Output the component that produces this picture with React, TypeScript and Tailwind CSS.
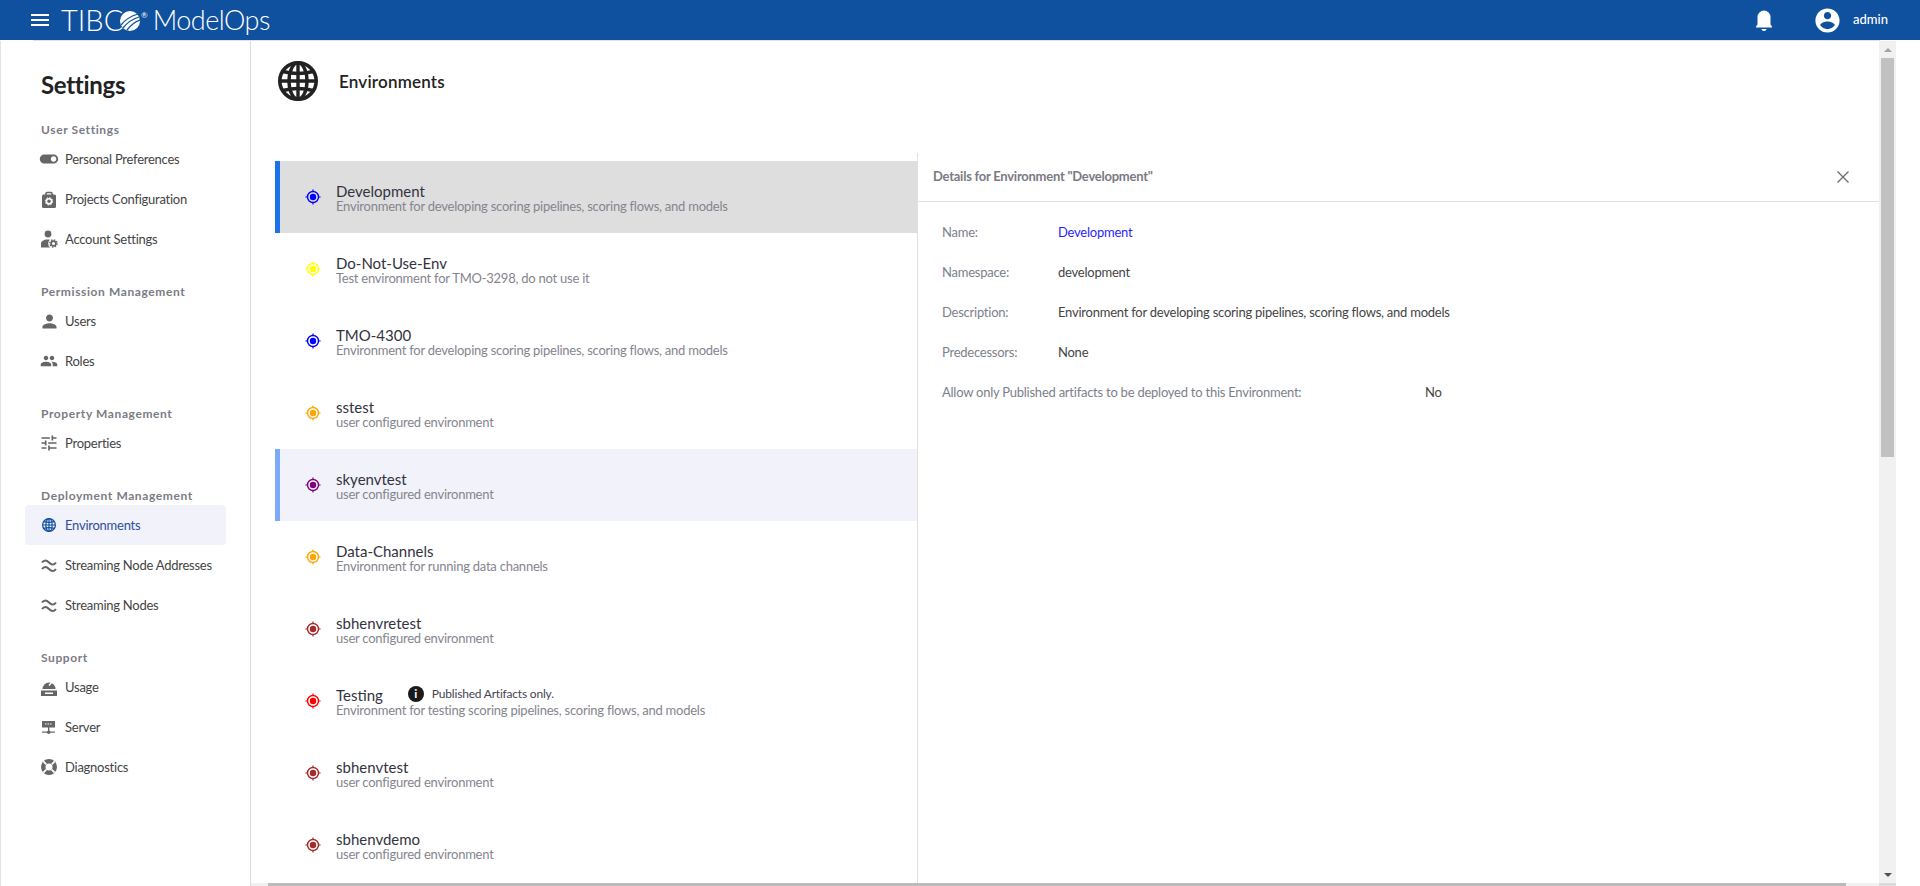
import React from "react";

const FONT = "font-['Lato','Noto_Sans',sans-serif]";

function Mui({ d, size, cls }: { d: string; size: number; cls?: string }) {
  return (
    <svg viewBox="0 0 24 24" width={size} height={size} className={cls} fill="currentColor">
      <path d={d} />
    </svg>
  );
}

function Globe({ size, cls }: { size: number; cls?: string }) {
  return (
    <svg viewBox="0 0 40 40" width={size} height={size} className={cls} fill="none" stroke="currentColor">
      <circle cx="20" cy="20" r="18.2" strokeWidth="3.6" />
      <ellipse cx="20" cy="20" rx="9" ry="18.2" strokeWidth="3.4" />
      <path d="M20 2v36M2 20h36" strokeWidth="3.4" />
      <path d="M5 10.5Q20 14.5 35 10.5M5 29.5Q20 25.5 35 29.5" strokeWidth="3.4" />
    </svg>
  );
}

function Box({ children }: { children: React.ReactNode }) {
  return <svg viewBox="0 0 20 20" width={20} height={20} fill="#666666">{children}</svg>;
}

const icons: Record<string, React.ReactNode> = {
  toggle: <Mui size={22} cls="shrink-0 text-[#666666]" d="M17 7H7c-2.76 0-5 2.24-5 5s2.24 5 5 5h10c2.76 0 5-2.24 5-5s-2.24-5-5-5zm0 8c-1.66 0-3-1.34-3-3s1.34-3 3-3 3 1.34 3 3-1.34 3-3 3z" />,
  case: (
    <Box>
      <path d="M7 6V4.5a1 1 0 0 1 1-1h4a1 1 0 0 1 1 1V6" fill="none" stroke="#666666" strokeWidth="1.6" />
      <rect x="3" y="5.500" width="14" height="13.500" rx="1.5" />
      <circle cx="10" cy="12.3" r="2.6" fill="none" stroke="#ffffff" strokeWidth="1.6" />
      <circle cx="10" cy="12.3" r="3.7" fill="none" stroke="#ffffff" strokeWidth="1" strokeDasharray="1.4 1.5" />
    </Box>
  ),
  account: (
    <Box>
      <circle cx="9" cy="5" r="3.4" />
      <path d="M2 18.500v-4C2 12.500 5 10.500 8.500 10.500c1.500 0 3 .3 4 .8V18.500z" />
      <circle cx="14.500" cy="14.500" r="5.300" fill="#ffffff" />
      <circle cx="14.500" cy="14.500" r="2.400" fill="none" stroke="#666666" strokeWidth="1.600" />
      <circle cx="14.500" cy="14.500" r="3.600" fill="none" stroke="#666666" strokeWidth="1.400" strokeDasharray="1.500 1.300" />
    </Box>
  ),
  users: <Mui size={21} cls="shrink-0 text-[#666666]" d="M12 12c2.21 0 4-1.790 4-4s-1.790-4-4-4-4 1.790-4 4 1.790 4 4 4zm0 2c-2.670 0-8 1.340-8 4v2h16v-2c0-2.660-5.330-4-8-4z" />,
  roles: <Mui size={18} cls="shrink-0 text-[#666666]" d="M16 11c1.660 0 2.990-1.340 2.990-3S17.660 5 16 5c-1.660 0-3 1.340-3 3s1.340 3 3 3zm-8 0c1.660 0 2.990-1.340 2.990-3S9.660 5 8 5C6.340 5 5 6.340 5 8s1.340 3 3 3zm0 2c-2.330 0-7 1.170-7 3.500V19h14v-2.500c0-2.330-4.670-3.500-7-3.500zm8 0c-.29 0-.62.02-.97.05 1.160.84 1.970 1.970 1.970 3.450V19h6v-2.500c0-2.330-4.670-3.500-7-3.500z" />,
  tune: <Mui size={20} cls="shrink-0 text-[#666666]" d="M3 17v2h6v-2H3zM3 5v2h10V5H3zm10 16v-2h8v-2h-8v-2h-2v6h2zM7 9v2H3v2h4v2h2V9H7zm14 4v-2H11v2h10zm-6-4h2V7h4V5h-4V3h-2v6z" />,
  globe: <Globe size={14} cls="text-[#0f519f]" />,
  waves: (
    <Box>
      <path d="M3 7.500c2-2.800 4.500-2.800 7 0s5 2.800 7 0M3 14c2-2.800 4.500-2.800 7 0s5 2.800 7 0" fill="none" stroke="#666666" strokeWidth="2" />
    </Box>
  ),
  usage: (
    <Box>
      <path d="M3.500 12a6.500 6.500 0 1 1 13 0z" />
      <path d="M10 8.500l3-3.500" stroke="#ffffff" strokeWidth="1.500" />
      <rect x="2" y="13.500" width="16" height="5.500" />
      <rect x="6" y="15.500" width="8" height="1.500" fill="#ffffff" />
    </Box>
  ),
  server: (
    <Box>
      <rect x="3" y="4" width="13" height="6.500" />
      <path d="M6 7h1.500M8.500 7h1.500M11 7h1.500" stroke="#ffffff" strokeWidth="1.200" />
      <rect x="9" y="10" width="1.400" height="6" />
      <rect x="3" y="14.500" width="13" height="1.200" />
      <circle cx="9.700" cy="15.200" r="1.800" />
    </Box>
  ),
  diag: (
    <Box>
      <circle cx="10" cy="10" r="8" />
      <path d="M4.300 4.300l3 3M15.700 4.300l-3 3M4.300 15.700l3-3M15.700 15.700l-3-3" stroke="#ffffff" strokeWidth="1.800" />
      <circle cx="10" cy="10" r="3.500" fill="#ffffff" />
    </Box>
  ),
};

const sections = [
  { title: "User Settings", items: [["toggle", "Personal Preferences"], ["case", "Projects Configuration"], ["account", "Account Settings"]] },
  { title: "Permission Management", items: [["users", "Users"], ["roles", "Roles"]] },
  { title: "Property Management", items: [["tune", "Properties"]] },
  { title: "Deployment Management", items: [["globe", "Environments"], ["waves", "Streaming Node Addresses"], ["waves", "Streaming Nodes"]] },
  { title: "Support", items: [["usage", "Usage"], ["server", "Server"], ["diag", "Diagnostics"]] },
];

const ENV = "Environment for developing scoring pipelines, scoring flows, and models";
const CONF = "user configured environment";
const envs = [
  { name: "Development", desc: ENV, color: "#0000ff", state: "selected" },
  { name: "Do-Not-Use-Env", desc: "Test environment for TMO-3298, do not use it", color: "#ffff00" },
  { name: "TMO-4300", desc: ENV, color: "#0000ff" },
  { name: "sstest", desc: CONF, color: "#ffa500" },
  { name: "skyenvtest", desc: CONF, color: "#800080", state: "hover" },
  { name: "Data-Channels", desc: "Environment for running data channels", color: "#ffa500" },
  { name: "sbhenvretest", desc: CONF, color: "#a52a2a" },
  { name: "Testing", desc: "Environment for testing scoring pipelines, scoring flows, and models", color: "#ff0000", info: true },
  { name: "sbhenvtest", desc: CONF, color: "#a52a2a" },
  { name: "sbhenvdemo", desc: CONF, color: "#a52a2a" },
];

function Target({ color }: { color: string }) {
  return (
    <svg viewBox="0 0 16 16" width={16} height={16} fill={color}>
      <circle cx="8" cy="8" r="5.500" fill="none" stroke={color} strokeWidth="1.400" />
      <circle cx="8" cy="8" r="3.200" />
      <path d="M8 .4v2.200M8 13.400v2.200M.4 8h2.200M13.400 8h2.200" stroke={color} strokeWidth="1.200" />
    </svg>
  );
}

function Sidebar() {
  return (
    <aside className="w-[251px] shrink-0 border-l border-r border-l-[#e4e4e4] border-r-[#dcdcdc] pt-[28px]">
      <h1 className="ml-[40px] h-[32px] text-[24px] leading-[32px] font-bold tracking-[-0.3px] text-[#222222]">Settings</h1>
      <div className="mt-[18px] flex flex-col gap-[22px]">
        {sections.map((s) => (
          <section key={s.title}>
            <h2 className="ml-[40px] h-[20px] text-[12px] leading-[22px] font-bold tracking-[0.6px] text-[#7b7b85]">{s.title}</h2>
            {s.items.map(([icon, label]) => {
              const active = label === "Environments";
              return (
                <div
                  key={label}
                  className={`ml-[24px] flex h-[40px] w-[201px] items-center gap-[6px] rounded-[4px] pl-[14px] text-[13px] tracking-[-0.25px] whitespace-nowrap ${active ? "bg-[#f1f2fa] text-[#2f4f9f]" : "text-[#444444]"}`}
                >
                  <span className="flex h-[20px] w-[20px] items-center justify-center">{icons[icon]}</span>
                  <span className="mt-[2px]">{label}</span>
                </div>
              );
            })}
          </section>
        ))}
      </div>
    </aside>
  );
}

function EnvRow({ e }: { e: (typeof envs)[number] }) {
  const bg = e.state === "selected" ? "bg-[#dedede] border-l-[#1a73e8]" : e.state === "hover" ? "bg-[#f1f2fa] border-l-[#7baaf7]" : "bg-white border-l-white";
  return (
    <div className={`flex h-[72px] items-start border-l-[5px] pl-[25px] ${bg}`}>
      <span className="mt-[28px] flex h-[16px] w-[16px] shrink-0">
        <Target color={e.color} />
      </span>
      <div className="ml-[15px] pt-[21px]">
        <div className="flex h-[16px] items-center">
          <span className="mt-[1px] text-[15px] leading-[16px] text-[#333340]">{e.name}</span>
          {e.info && (
            <>
              <span className="ml-[25px] flex h-[16px] w-[16px] items-center justify-center rounded-full bg-[#1a1a1a] text-[12px] leading-none font-bold text-white">i</span>
              <span className="ml-[8px] text-[12px] leading-[16px] tracking-[-0.2px] text-[#444450]">Published Artifacts only.</span>
            </>
          )}
        </div>
        <div className="h-[16px] text-[13px] leading-[16px] tracking-[-0.24px] whitespace-nowrap text-[#85858f]">{e.desc}</div>
      </div>
    </div>
  );
}

const details: [string, string, string][] = [
  ["Name:", "Development", "text-[#2b1fff]"],
  ["Namespace:", "development", "text-[#444444]"],
  ["Description:", ENV, "text-[#444444]"],
  ["Predecessors:", "None", "text-[#444444]"],
];

function Details() {
  return (
    <div className="flex-1">
      <div className="flex h-[49px] items-center justify-between border-b border-[#e0e0e0] pr-[30px] pl-[15px]">
        <span className="text-[13px] font-bold tracking-[-0.25px] text-[#7a7a84]">Details for Environment "Development"</span>
        <svg viewBox="0 0 12 12" width={12} height={12} fill="none" stroke="#6b6b6b" strokeWidth="1.300">
          <path d="M.5.5l11 11M11.500.5l-11 11" />
        </svg>
      </div>
      <div className="pt-[11px] pl-[24px] text-[13px] tracking-[-0.24px]">
        {details.map(([l, v, c]) => (
          <div key={l} className="flex h-[40px] items-center">
            <span className="w-[116px] text-[#7d7f8c]">{l}</span>
            <span className={c}>{v}</span>
          </div>
        ))}
        <div className="flex h-[40px] items-center">
          <span className="w-[483px] text-[#7d7f8c]">Allow only Published artifacts to be deployed to this Environment:</span>
          <span className="text-[#444444]">No</span>
        </div>
      </div>
    </div>
  );
}

function Scrollbar() {
  return (
    <div className="flex w-[17px] shrink-0 flex-col items-center bg-[#f1f1f1]">
      <div className="flex h-[17px] w-full items-center justify-center">
        <svg viewBox="0 0 8 4" width={8} height={4} fill="#a3a3a3"><path d="M4 0l4 4H0z" /></svg>
      </div>
      <div className="h-[399px] w-[13px] bg-[#c1c1c1]" />
      <div className="flex-1" />
      <div className="flex h-[17px] w-full items-center justify-center">
        <svg viewBox="0 0 8 4" width={8} height={4} fill="#505050"><path d="M0 0h8L4 4z" /></svg>
      </div>
    </div>
  );
}

export default function App() {
  return (
    <div className={`flex h-screen flex-col overflow-hidden bg-white ${FONT}`}>
      <header className="flex h-[40px] shrink-0 items-center bg-[#0f519f] pl-[28px] text-white">
        <Mui size={24} d="M3 18h18v-2H3v2zm0-5h18v-2H3v2zm0-7v2h18V6H3z" />
        <span className="ml-[9px] w-[59px] text-[29px] leading-[40px] font-light">TIBC</span>
        <svg viewBox="0 0 20 20" width={20} height={20} className="mt-[2px]">
          <circle cx="10" cy="10" r="10" fill="#ffffff" />
          <path d="M1 14C5 9 11 5 18 3M3 17C7 12 12 8 19 6M7 19C10 15 14 11 20 9" fill="none" stroke="#0f519f" strokeWidth="1.300" />
        </svg>
        <span className="mb-[10px] ml-[1px] text-[8px] leading-none">®</span>
        <span className="ml-[5px] text-[27px] leading-[40px] font-light tracking-[-0.5px]">ModelOps</span>
        <div className="flex-1" />
        <svg viewBox="0 0 18 22" width={18} height={22} fill="currentColor" className="mr-[40px]">
          <path d="M1 17.500l1.500-2V8a6.500 6.500 0 0 1 13 0v7.500l1.500 2v1H1zM6.500 20h5c0 1-1 2-2.500 2s-2.500-1-2.500-2z" />
        </svg>
        <Mui size={29} d="M12 2C6.480 2 2 6.480 2 12s4.480 10 10 10 10-4.480 10-10S17.520 2 12 2zm0 3c1.660 0 3 1.340 3 3s-1.340 3-3 3-3-1.340-3-3 1.340-3 3-3zm0 14.200c-2.500 0-4.710-1.280-6-3.220.03-1.990 4-3.080 6-3.080 1.990 0 5.970 1.090 6 3.080-1.290 1.940-3.500 3.220-6 3.220z" />
        <span className="mr-[31px] ml-[11px] w-[36px] text-[13px] font-medium">admin</span>
      </header>
      <div className="ml-[33px] mr-[40px] h-px shrink-0 bg-[#e2e2e2]" />
      <div className="flex min-h-0 flex-1">
        <Sidebar />
        <main className="mr-[24px] flex min-w-0 flex-1 flex-col">
          <div className="flex min-h-0 flex-1">
            <div className="flex min-w-0 flex-1 flex-col">
              <div className="flex h-[112px] shrink-0 items-start pt-[20px] pl-[27px]">
                <Globe size={40} cls="text-[#222222]" />
                <h2 className="ml-[21px] text-[17px] leading-[42px] font-semibold tracking-[0.2px] text-[#222222]">Environments</h2>
              </div>
              <div className="flex min-h-0 flex-1">
                <div className="ml-[24px] w-[643px] shrink-0 overflow-hidden border-r border-[#e0e0e0] pt-[8px]">
                  {envs.map((e) => <EnvRow key={e.name} e={e} />)}
                </div>
                <Details />
              </div>
            </div>
            <Scrollbar />
          </div>
          <div className="flex h-[3px] shrink-0">
            <div className="flex flex-1 bg-[#f1f1f1] pl-[17px] pr-[33px]">
              <div className="h-full flex-1 bg-[#bbbbbb]" />
            </div>
            <div className="w-[17px] bg-[#dcdcdc]" />
          </div>
        </main>
      </div>
    </div>
  );
}
